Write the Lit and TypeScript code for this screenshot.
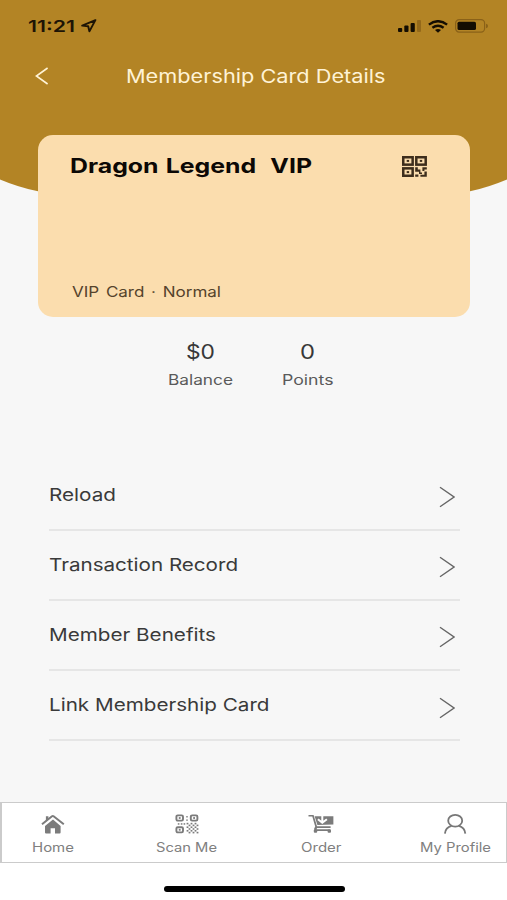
import { LitElement, html, css, svg } from "lit";
import { customElement, property } from "lit/decorators.js";
import { styleMap } from "lit/directives/style-map.js";

/** Single line of text, stretched horizontally to fill a given width. */
@customElement("wide-text")
class WideText extends LitElement {
  @property() text = "";
  @property({ type: Number }) width = 100;

  static styles = css`
    :host { display: block; flex: none; white-space: pre; }
    .box { display: block; }
    .line { display: inline-block; transform-origin: 0 50%; }
  `;

  render() {
    return html`<span class="box" style=${styleMap({ width: `${this.width}px` })}><span class="line">${this.text}</span></span>`;
  }

  updated() {
    const line = this.renderRoot.querySelector(".line") as HTMLElement;
    line.style.transform = "none";
    const natural = line.getBoundingClientRect().width;
    if (natural > 0) line.style.transform = `scaleX(${this.width / natural})`;
  }
}

const chevron = html`<svg class="chevron" width="16" height="22" viewBox="0 0 16 22" fill="none" stroke="#666" stroke-width="1.4">
  <path d="M1 1.2 15 11 1 20.8"/></svg>`;

const homeIcon = html`<svg width="24" height="20" viewBox="0 0 24 20" fill="#7b7b7b">
  <path d="M12 5.6 4 11.9V18.6Q4 19.6 5 19.6H9.6V14.2H14V19.6H18.6Q19.6 19.6 19.6 18.6V11.9Z"/>
  <path d="M4.9 6.8V2.2H7.4V4.6Z"/>
  <path d="M1 10.3 11 2.2Q11.8 1.6 12.6 2.2L22.8 10.3" fill="none" stroke="#7b7b7b" stroke-width="2"/></svg>`;

const checks: [number, number][] = [];
for (let r = 0; r < 6; r++) for (let c = 0; c < 6; c++) if ((r + c) % 2 === 0) checks.push([11.6 + c * 2, 8.8 + r * 1.8]);

const scanIcon = html`<svg width="24" height="20" viewBox="0 0 24 20" fill="none" stroke="#7b7b7b" stroke-width="1.9">
  <rect x="1.4" y="1.4" width="6.6" height="5.2" rx="1.3"/>
  <rect x="15.8" y="1.4" width="6.6" height="5.2" rx="1.3"/>
  <rect x="1.4" y="13.2" width="6.6" height="5.2" rx="1.3"/>
  <g fill="#7b7b7b" stroke="none">
    <rect x="3.8" y="3.1" width="1.8" height="1.8"/><rect x="18.2" y="3.1" width="1.8" height="1.8"/><rect x="3.8" y="14.9" width="1.8" height="1.8"/>
    <rect x="11.3" y="2" width="1.4" height="1.5"/><rect x="11.3" y="5.4" width="1.4" height="1.5"/>
    <rect x="2.8" y="9.2" width="1.6" height="1.5"/><rect x="5.8" y="9.2" width="1.6" height="1.5"/><rect x="8.6" y="9.2" width="1.6" height="1.5"/>
    ${checks.map(([x, y]) => svg`<rect x=${x} y=${y} width="1.8" height="1.6"/>`)}
  </g></svg>`;

const orderIcon = html`<svg width="26" height="20" viewBox="0 0 26 20" fill="#7b7b7b">
  <path d="M.5.9H5.6L9 12.2H22.6V14H9.2L8.4 15.3H22.4V17H6.3L6.2 14.6 7.2 12.6 4.3 2.6H.5Z"/>
  <path d="M6.6 2.2H25.4V10.6L9.4 11Z"/>
  <rect x="5.8" y="15.6" width="3.4" height="3.2" rx="1"/><rect x="19.6" y="15.6" width="3.4" height="3.2" rx="1"/>
  <path d="M14.3 1.4V8.4M9.9 5.2 14.3 8.8 18.9 5.2" fill="none" stroke="#fff" stroke-width="2"/></svg>`;

const profileIcon = html`<svg width="24" height="22" viewBox="0 0 24 22" fill="none" stroke="#777" stroke-width="1.8">
  <ellipse cx="12.2" cy="7.7" rx="7" ry="5.9"/>
  <path d="M1.9 20.6C2.2 16.8 5 13.8 8.6 12.9M22.3 20.6C22 16.8 19.4 13.8 15.8 12.9"/></svg>`;

const tabs = [
  { label: "Home", width: 42, icon: homeIcon },
  { label: "Scan Me", width: 61, icon: scanIcon },
  { label: "Order", width: 40.5, icon: orderIcon },
  { label: "My Profile", width: 71, icon: profileIcon },
];

const rows = [
  { label: "Reload", width: 67 },
  { label: "Transaction Record", width: 189 },
  { label: "Member Benefits", width: 167 },
  { label: "Link Membership Card", width: 220.5 },
];

@customElement("app-root")
class AppRoot extends LitElement {
  static styles = css`
    :host {
      display: flex; flex-direction: column; position: relative; z-index: 0;
      box-sizing: border-box; width: 507px; height: 900px; overflow: hidden;
      background: #f7f7f7; color: #3c3c3c;
      font-family: Inter, "Liberation Sans", sans-serif;
    }
    svg { display: block; flex: none; }
    .backdrop { position: absolute; top: 0; left: 0; z-index: -1; }
    .status { display: flex; align-items: center; height: 52px; padding: 0 19px 0 28px; flex: none; box-sizing: border-box; }
    .time { font-size: 16.5px; line-height: 20px; font-weight: 600; color: #1d1405; }
    .arrow { margin-left: 6px; }
    .cell { margin-left: auto; }
    .wifi { margin-left: 6px; }
    .battery { margin-left: 7px; }
    .bar { display: flex; align-items: center; height: 48px; padding-left: 35px; flex: none; }
    .title { margin-left: 77px; font-size: 18.6px; line-height: 24px; color: #fff3d6; }
    .card {
      display: flex; flex-direction: column; justify-content: space-between; flex: none; box-sizing: border-box;
      width: 432px; height: 182px; margin: 35px 0 0 38px; padding: 19px 43px 14px 31.5px;
      border-radius: 15px; background: #fbddae;
    }
    .card-head { display: flex; justify-content: space-between; align-items: center; }
    .name { font-size: 20.2px; line-height: 24px; font-weight: 700; word-spacing: 1px; color: #0c0805; }
    .kind { margin-left: 2.5px; font-size: 14.3px; line-height: 22px; word-spacing: 1.6px; color: #55432c; }
    .stats { display: flex; gap: 49.5px; margin: 23px 0 0 167.5px; flex: none; }
    .stat { display: flex; flex-direction: column; align-items: center; }
    .value { font-size: 19.5px; line-height: 24px; color: #383838; }
    .caption { margin-top: 5px; font-size: 14px; line-height: 22px; color: #5a5a5a; }
    .list { margin: 69.5px 47px 0 49px; flex: none; }
    .row {
      display: flex; justify-content: space-between; align-items: center; box-sizing: border-box;
      height: 70.2px; padding-right: 5px; border-bottom: 2px solid #e6e6e6;
      font-size: 17.4px; line-height: 24px; color: #3a3a3a;
    }
    .chevron { margin-top: 5px; }
    .tabs {
      display: flex; justify-content: space-between; box-sizing: border-box; flex: none;
      height: 61px; margin-top: auto; padding: 0 15px;
      background: #fff; border: 1.5px solid #cbcbcb; border-left-width: 2px;
    }
    .tab { display: flex; flex-direction: column; align-items: center; width: 71px; padding-top: 10px; }
    .icon { display: flex; align-items: center; height: 22px; }
    .label { margin-top: 3px; font-size: 12.6px; line-height: 20px; color: #808080; }
    .foot { display: flex; justify-content: center; height: 37px; flex: none; background: #fff; box-sizing: border-box; padding: 23px 0 0 1px; }
    .pill { width: 181px; height: 6px; border-radius: 3px; background: #000; }
  `;

  render() {
    return html`
      <svg class="backdrop" width="507" height="220" viewBox="0 0 507 220">
        <path fill="#b38425" d="M0 0H507V179.5Q488 187.5 470 191.3 380 208 253 208 127 208 38 191.3 19 187.5 0 179.5Z"/></svg>
      <div class="status">
        <wide-text class="time" text="11:21" .width=${47}></wide-text>
        <svg class="arrow" width="16" height="14" viewBox="0 0 16 14" fill="none" stroke="#1d1405" stroke-width="1.9" stroke-linejoin="round">
          <path d="M14.4 1.1 1.2 6.6 7.2 7.2 8.4 12.4Z"/></svg>
        <svg class="cell" width="24" height="12" viewBox="0 0 24 12" fill="#140d02">
          <rect x="0" y="8" width="4.2" height="4" rx="1"/><rect x="6.3" y="5.6" width="4.2" height="6.4" rx="1"/>
          <rect x="12.6" y="2.9" width="4.2" height="9.1" rx="1"/><rect x="19" y="0" width="4" height="12" rx="1" fill="#94691a"/></svg>
        <svg class="wifi" width="20" height="13" viewBox="0 0 20 13" fill="none" stroke="#140d02" stroke-width="2.4">
          <path d="M.9 4.6Q10-2.2 19.1 4.6M4.4 7.8Q10 3.7 15.6 7.8"/>
          <path d="M7 10Q10 8 13 10L10 12.8Z" fill="#140d02" stroke="none"/></svg>
        <svg class="battery" width="33" height="14" viewBox="0 0 33 14">
          <rect x=".6" y=".7" width="29" height="12.4" rx="3.6" fill="none" stroke="#8a6118" stroke-width="1.2"/>
          <rect x="2.5" y="2.7" width="18.5" height="8.4" rx="1.6" fill="#140d02"/>
          <path d="M31 4.8Q33 5.2 33 7T31 9.2Z" fill="#8a6118"/></svg>
      </div>
      <div class="bar">
        <svg width="14" height="18" viewBox="0 0 14 18" fill="none" stroke="#fff3d6" stroke-width="1.6"><path d="M12.6 1 1.4 9 12.6 17"/></svg>
        <wide-text class="title" text="Membership Card Details" .width=${259.5}></wide-text>
      </div>
      <div class="card">
        <div class="card-head">
          <wide-text class="name" text="Dragon Legend  VIP" .width=${242}></wide-text>
          <svg width="25" height="21" viewBox="0 0 25 21" fill="none" stroke="#3d2d1c" stroke-width="2.5">
            <rect x="1.25" y="1.25" width="9.4" height="7.4"/><rect x="14.3" y="1.25" width="9.4" height="7.4"/><rect x="1.25" y="12.35" width="9.4" height="7.4"/>
            <g fill="#3d2d1c" stroke="none">
              <rect x="4.7" y="3.9" width="2.4" height="2"/><rect x="17.8" y="3.9" width="2.4" height="2"/><rect x="4.7" y="15.1" width="2.4" height="2"/>
              <path d="M13.2 11.2H15.8V13.4H18.4V16.6H20V18H17V15.8H13.2ZM20.4 11.2H24.8V13.6H22.4V15H20.4ZM13.2 18.5H16.4V20.8H13.2ZM22.4 15.6H24.8V20.8H18.4V18.8H22.4Z"/>
            </g></svg>
        </div>
        <wide-text class="kind" text="VIP Card · Normal" .width=${149}></wide-text>
      </div>
      <div class="stats">
        <div class="stat">
          <wide-text class="value" text="$0" .width=${29}></wide-text>
          <wide-text class="caption" text="Balance" .width=${65}></wide-text>
        </div>
        <div class="stat">
          <wide-text class="value" text="0" .width=${15}></wide-text>
          <wide-text class="caption" text="Points" .width=${51.5}></wide-text>
        </div>
      </div>
      <div class="list">
        ${rows.map((r) => html`<div class="row"><wide-text .text=${r.label} .width=${r.width}></wide-text>${chevron}</div>`)}
      </div>
      <div class="tabs">
        ${tabs.map((t) => html`<div class="tab"><div class="icon">${t.icon}</div>
          <wide-text class="label" .text=${t.label} .width=${t.width}></wide-text></div>`)}
      </div>
      <div class="foot"><div class="pill"></div></div>
    `;
  }
}
